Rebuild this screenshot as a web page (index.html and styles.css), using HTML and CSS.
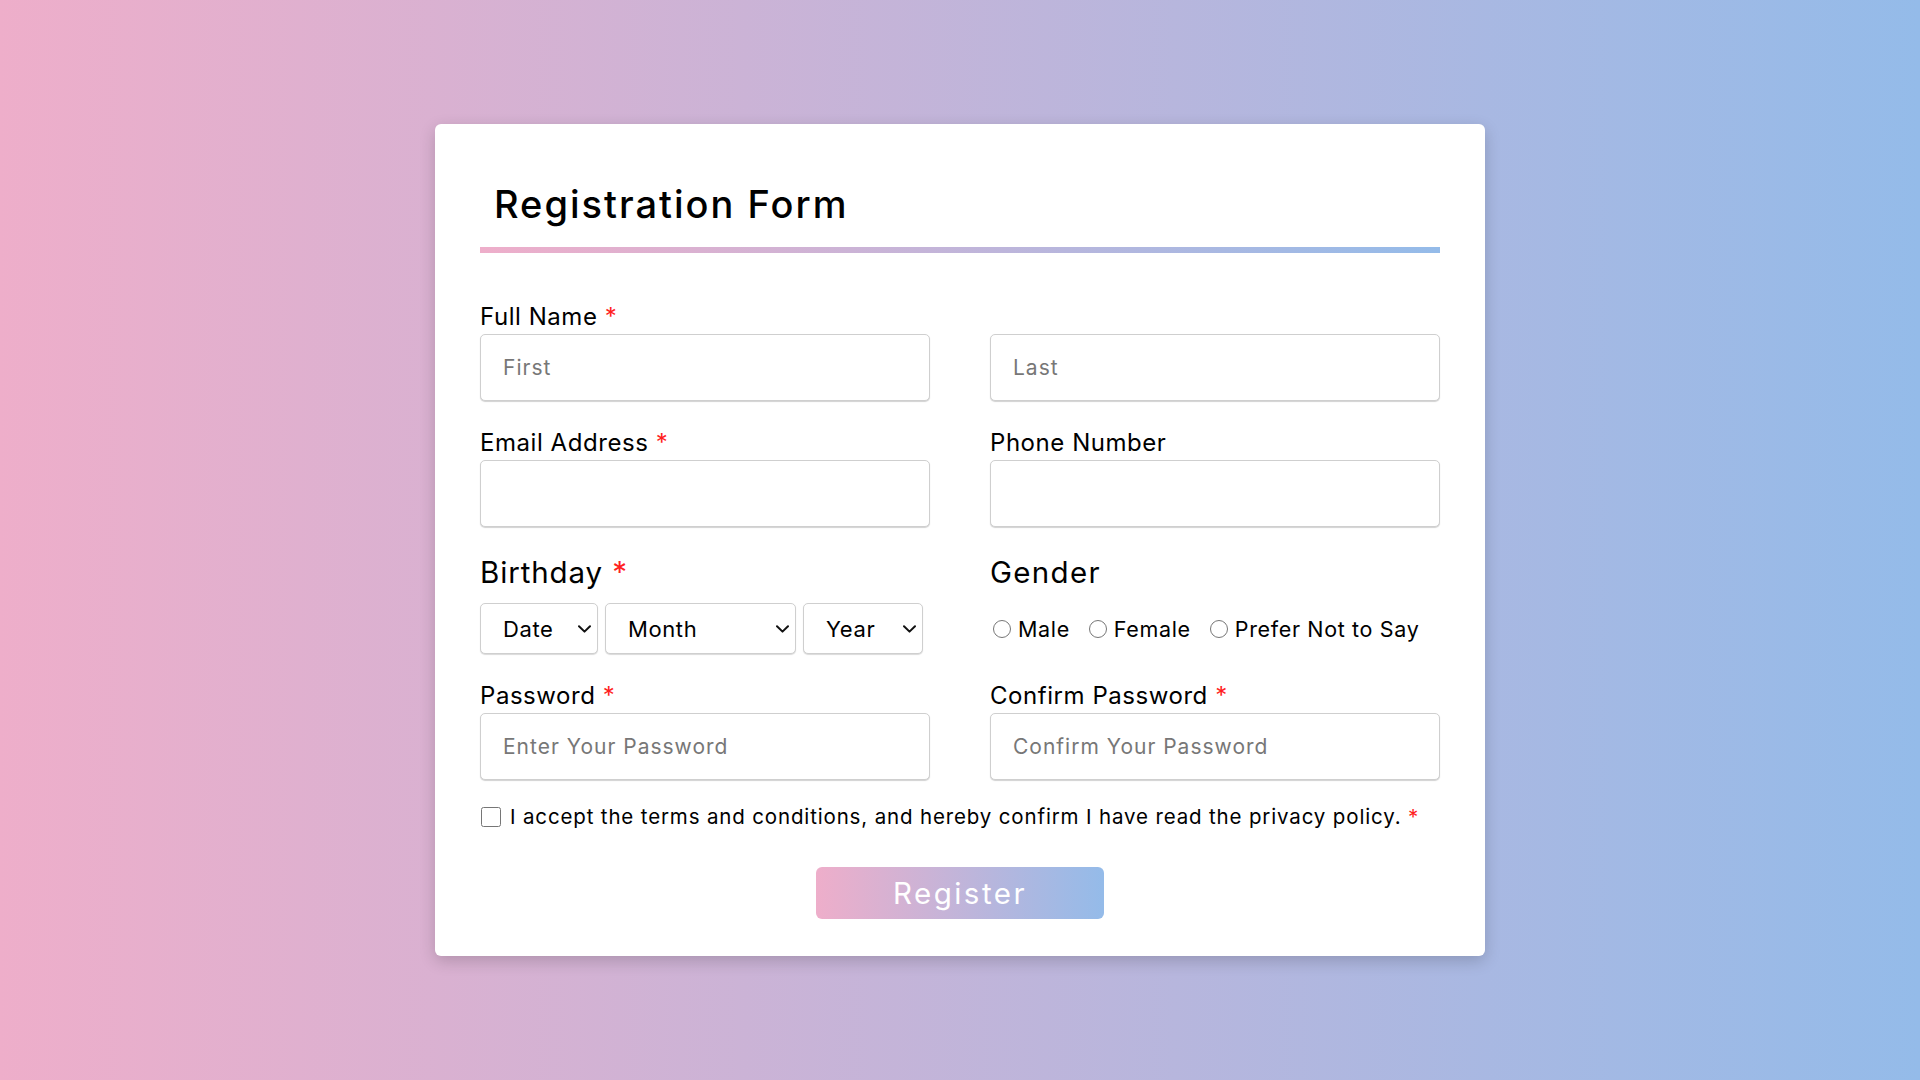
FILE: index.html
```html
<!DOCTYPE html>
<html lang="en">
<head>
<meta charset="utf-8">
<title>Registration Form</title>
<link rel="stylesheet" href="styles.css">
</head>
<body>
<div class="page">
  <form class="card">
    <h1 class="title">Registration Form</h1>
    <div class="rule"></div>
    <div class="grid">
      <div class="field">
        <label class="label">Full Name <span class="req">*</span></label>
        <input class="input" type="text" placeholder="First">
      </div>
      <div class="field">
        <label class="label">&nbsp;</label>
        <input class="input" type="text" placeholder="Last">
      </div>
      <div class="field">
        <label class="label">Email Address <span class="req">*</span></label>
        <input class="input" type="email">
      </div>
      <div class="field">
        <label class="label">Phone Number</label>
        <input class="input" type="tel">
      </div>
      <div class="field">
        <div class="label big bday">Birthday <span class="req">*</span></div>
        <div class="selects">
          <span class="sel-wrap sel-date">
            <select class="select"><option>Date</option></select>
            <svg class="chev" viewBox="0 0 13 8" width="13" height="8"><path d="M1 1.2 L6.5 6.6 L12 1.2" fill="none" stroke="#111" stroke-width="2" stroke-linecap="round" stroke-linejoin="round"/></svg>
          </span>
          <span class="sel-wrap sel-month">
            <select class="select"><option>Month</option></select>
            <svg class="chev" viewBox="0 0 13 8" width="13" height="8"><path d="M1 1.2 L6.5 6.6 L12 1.2" fill="none" stroke="#111" stroke-width="2" stroke-linecap="round" stroke-linejoin="round"/></svg>
          </span>
          <span class="sel-wrap sel-year">
            <select class="select"><option>Year</option></select>
            <svg class="chev" viewBox="0 0 13 8" width="13" height="8"><path d="M1 1.2 L6.5 6.6 L12 1.2" fill="none" stroke="#111" stroke-width="2" stroke-linecap="round" stroke-linejoin="round"/></svg>
          </span>
        </div>
      </div>
      <div class="field">
        <div class="label big">Gender</div>
        <div class="radios">
          <label class="radio"><input type="radio" name="g">Male</label>
          <label class="radio"><input type="radio" name="g">Female</label>
          <label class="radio"><input type="radio" name="g">Prefer Not to Say</label>
        </div>
      </div>
      <div class="field">
        <label class="label">Password <span class="req">*</span></label>
        <input class="input" type="password" placeholder="Enter Your Password">
      </div>
      <div class="field">
        <label class="label">Confirm Password <span class="req">*</span></label>
        <input class="input" type="password" placeholder="Confirm Your Password">
      </div>
    </div>
    <label class="terms"><input type="checkbox" class="check"><span>I accept the terms and conditions, and hereby confirm I have read the privacy policy. <span class="req">*</span></span></label>
    <div class="actions">
      <button type="button" class="btn">Register</button>
    </div>
  </form>
</div>
</body>
</html>
```
FILE: styles.css
```css
* { box-sizing: border-box; }
html, body { margin: 0; padding: 0; }
body {
  font-family: Inter, "Noto Sans", sans-serif;
  color: #000;
  background: linear-gradient(to right, #eeaeca, #94bbe9);
  min-height: 100vh;
}
.page {
  min-height: 100vh;
  display: flex;
  align-items: center;
  justify-content: center;
}
.card {
  width: 1050px;
  background: #fff;
  border-radius: 6px;
  padding: 56px 45px 37px 45px;
  box-shadow: 0 5px 16px rgba(0, 0, 0, 0.18);
}
.title {
  margin: 0;
  padding-left: 14px;
  font-size: 38px;
  line-height: 48px;
  font-weight: 500;
  letter-spacing: 2px;
  color: #000;
}
.rule {
  margin-top: 19px;
  height: 6px;
  background: linear-gradient(to right, #eeaeca, #94bbe9);
}
.grid {
  margin-top: 47px;
  display: grid;
  grid-template-columns: 450px 450px;
  column-gap: 60px;
  row-gap: 25px;
}
.field { display: flex; flex-direction: column; }
.label {
  display: block;
  font-size: 24px;
  line-height: 34px;
  letter-spacing: 0.55px;
  color: #000;
}
.label.big {
  font-size: 29.5px;
  line-height: 40px;
  letter-spacing: 1.3px;
  margin-bottom: 11px;
}
.label.bday { letter-spacing: 0.9px; }
.req { color: #ff1f1f; letter-spacing: 0; }
.input {
  height: 67px;
  width: 100%;
  border: 1px solid #cfcfcf;
  border-radius: 5px;
  box-shadow: 0 1px 1px rgba(0, 0, 0, 0.18);
  padding: 0 22px;
  font-family: Inter, "Noto Sans", sans-serif;
  font-size: 21px;
  letter-spacing: 1px;
  color: #000;
  background: #fff;
  outline: none;
}
.input::placeholder { color: #777; }
.selects { display: flex; gap: 7px; }
.sel-wrap { position: relative; display: block; }
.sel-date { width: 118px; }
.sel-month { width: 191px; }
.sel-year { width: 120px; }
.select {
  -webkit-appearance: none;
  appearance: none;
  width: 100%;
  height: 51px;
  border: 1px solid #cfcfcf;
  border-radius: 5px;
  box-shadow: 0 1px 1px rgba(0, 0, 0, 0.15);
  background-color: #fff;
  font-family: Inter, "Noto Sans", sans-serif;
  font-size: 22px;
  letter-spacing: 0.6px;
  color: #000;
  padding: 0 24px 0 22px;
  outline: none;
}
.chev {
  position: absolute;
  right: 7px;
  top: 22px;
  pointer-events: none;
}
.radios {
  height: 51px;
  display: flex;
  align-items: center;
  gap: 19px;
  padding-left: 3px;
}
.radio {
  display: flex;
  align-items: center;
  gap: 7px;
  font-size: 21.5px;
  letter-spacing: 0.65px;
}
.radio input {
  width: 18px;
  height: 18px;
  margin: 0;
}
.terms {
  margin-top: 22px;
  display: flex;
  align-items: center;
  gap: 9px;
  font-size: 20.5px;
  letter-spacing: 0.85px;
  line-height: 30px;
}
.check {
  width: 20px;
  height: 20px;
  margin: 0 0 0 1px;
}
.actions {
  margin-top: 35px;
  display: flex;
  justify-content: center;
}
.btn {
  width: 288px;
  height: 52px;
  border: none;
  border-radius: 6px;
  background: linear-gradient(to right, #eeaeca, #94bbe9);
  color: #fff;
  font-family: Inter, "Noto Sans", sans-serif;
  font-size: 29.5px;
  letter-spacing: 2.5px;
  font-weight: 400;
  padding: 0;
  cursor: pointer;
}
```
